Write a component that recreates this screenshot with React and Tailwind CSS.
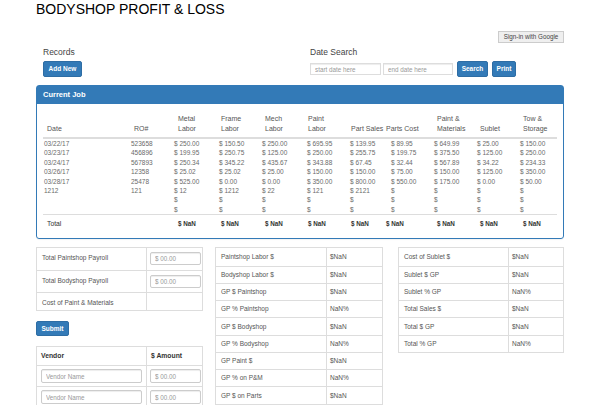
const rows = [
  ['03/22/17', '523658', '$ 250.00', '$ 150.50', '$ 250.00', '$ 695.95', '$ 139.95', '$ 89.95', '$ 649.99', '$ 25.00', '$ 150.00'],
  ['03/23/17', '456896', '$ 199.95', '$ 250.75', '$ 125.00', '$ 250.00', '$ 255.75', '$ 199.75', '$ 375.50', '$ 125.00', '$ 250.00'],
  ['03/24/17', '567893', '$ 250.34', '$ 345.22', '$ 435.67', '$ 343.88', '$ 67.45', '$ 32.44', '$ 567.89', '$ 34.22', '$ 234.33'],
  ['03/26/17', '12358', '$ 25.02', '$ 25.02', '$ 25.00', '$ 150.00', '$ 150.00', '$ 75.00', '$ 150.00', '$ 125.00', '$ 350.00'],
  ['03/28/17', '25478', '$ 525.00', '$ 0.00', '$ 0.00', '$ 350.00', '$ 800.00', '$ 550.00', '$ 175.00', '$ 0.00', '$ 50.00'],
  ['1212', '121', '$ 12', '$ 1212', '$ 22', '$ 121', '$ 2121', '$', '$', '$', '$'],
  ['', '', '$', '$', '$', '$', '$', '$', '$', '$', '$'],
  ['', '', '$', '$', '$', '$', '$', '$', '$', '$', '$'],
]

const heads = [['Date'], ['RO#'], ['Metal', 'Labor'], ['Frame', 'Labor'], ['Mech', 'Labor'], ['Paint', 'Labor'], ['Part Sales'], ['Parts Cost'], ['Paint &', 'Materials'], ['Sublet'], ['Tow &', 'Storage']]

const totals = ['Total', '', '$ NaN', '$ NaN', '$ NaN', '$ NaN', '$ NaN', '$ NaN', '$ NaN', '$ NaN', '$ NaN']

// header / footer text sits a little right of the data text
const offs = ['pl-[4px]', 'pl-[4px]', 'pl-[5px]', 'pl-[3px]', 'pl-[4px]', 'pl-[2px]', 'pl-[2px]', 'ml-[-4px]', 'pl-[4px]', 'pl-[4px]', 'pl-[4px]']

const grid = 'grid grid-cols-[87px_43px_45px_43px_45px_43px_41px_43px_43px_43px_44px]'

const gpRows = [
  ['Paintshop Labor $', '$NaN'],
  ['Bodyshop Labor $', '$NaN'],
  ['GP $ Paintshop', '$NaN'],
  ['GP % Paintshop', 'NaN%'],
  ['GP $ Bodyshop', '$NaN'],
  ['GP % Bodyshop', 'NaN%'],
  ['GP Paint $', '$NaN'],
  ['GP % on P&M', 'NaN%'],
  ['GP $ on Parts', '$NaN'],
]

const totalRows = [
  ['Cost of Sublet $', '$NaN'],
  ['Sublet $ GP', '$NaN'],
  ['Sublet % GP', 'NaN%'],
  ['Total Sales $', '$NaN'],
  ['Total $ GP', '$NaN'],
  ['Total % GP', 'NaN%'],
]

function Btn({ children, className = '' }) {
  return (
    <button className={`block bg-[#337ab7] border border-[#2e6da4] rounded-[2px] text-white font-bold text-[6.5px] leading-none ${className}`}>
      {children}
    </button>
  )
}

function Field({ placeholder, className = '' }) {
  return (
    <input
      placeholder={placeholder}
      className={`block border border-[#ccc] rounded-[2px] bg-white px-[4px] text-[6.3px] placeholder:text-[#999] shadow-[inset_0_1px_1px_rgba(0,0,0,0.075)] outline-none ${className}`}
    />
  )
}

function InfoTable({ data, labelW }) {
  return (
    <div className="border border-[#ddd]">
      {data.map(([label, val], i) => (
        <div key={i} className={`flex h-[17.25px] text-[6.5px] text-[#555] ${i > 0 ? 'border-t border-[#ddd]' : ''}`}>
          <div className={`${labelW} border-r border-[#ddd] pl-[5px] flex items-center`}>{label}</div>
          <div className="flex-1 pl-[3px] flex items-center">{val}</div>
        </div>
      ))}
    </div>
  )
}

export default function App() {
  return (
    <div className="w-[600px] h-[405px] overflow-hidden bg-white px-[36px] pt-px font-['Liberation_Sans',Arial,sans-serif] text-[#333]">
      <h1 className="text-[14px] leading-[16px] font-normal text-black">BODYSHOP PROFIT &amp; LOSS</h1>

      <div className="flex justify-end mt-[14px]">
        <button className="block h-[12px] w-[66px] bg-[#efefef] border border-[#ccc] text-[6.3px] text-[#444] leading-none">Sign-in with Google</button>
      </div>

      {/* Records + date search */}
      <div className="flex mt-[3px]">
        <div className="w-[274px] pl-[7px]">
          <p className="text-[8.5px] leading-[12px] text-[#444]">Records</p>
          <Btn className="mt-[3px] h-[16px] w-[39px]">Add New</Btn>
        </div>
        <div>
          <p className="text-[8.5px] leading-[12px] text-[#444]">Date Search</p>
          <div className="flex items-center mt-[3px] h-[16px]">
            <Field placeholder="start date here" className="w-[71px] h-[12px] border-[#ddd] rounded-none px-[2px]" />
            <Field placeholder="end date here" className="w-[70px] h-[12px] ml-[2px] border-[#ddd] rounded-none px-[2px]" />
            <Btn className="ml-[4px] h-[16px] w-[31px]">Search</Btn>
            <Btn className="ml-[4px] h-[16px] w-[24px]">Print</Btn>
          </div>
        </div>
      </div>

      {/* Current job panel */}
      <div className="mt-[8px] border border-[#337ab7] rounded-[3px] shadow-[0_1px_1px_rgba(0,0,0,0.05)]">
        <div className="h-[18px] bg-[#337ab7] pl-[6px] flex items-center text-white font-bold text-[7.5px]">Current Job</div>
        <div className="px-[6px] pb-[6px]">
          <div className={`${grid} pt-[10px] pb-[3px] border-b-2 border-[#ddd] text-[7px] leading-[10px] text-[#555]`}>
            {heads.map((h, i) => (
              <div key={i} className={`flex flex-col justify-end whitespace-nowrap ${offs[i]}`}>
                {h.map((l) => <span key={l}>{l}</span>)}
              </div>
            ))}
          </div>
          {rows.map((r, i) => (
            <div key={i} className={`${grid} text-[6.5px] leading-[9.4px] text-[#6a6a6a]`}>
              {r.map((c, j) => <div key={j} className="pl-[1px] whitespace-nowrap">{c}</div>)}
            </div>
          ))}
          <div className={`${grid} h-[18px] items-center border-t border-[#ddd] text-[6.8px]`}>
            {totals.map((t, i) => (
              <div key={i} className={`whitespace-nowrap ${offs[i]} ${i === 0 ? 'text-[#333]' : 'font-bold text-[#333] text-[6.3px]'}`}>{t}</div>
            ))}
          </div>
        </div>
      </div>

      {/* Lower section */}
      <div className="flex items-start mt-[8px]">
        <div className="w-[169px]">
          <div className="border border-[#ddd] text-[6.5px] text-[#555]">
            <div className="flex h-[22px]">
              <div className="w-[110px] border-r border-[#ddd] pl-[5px] pt-[5px]">Total Paintshop Payroll</div>
              <div className="flex-1 pl-[3px] pt-[4px]"><Field placeholder="$ 00.00" className="w-[51px] h-[13px]" /></div>
            </div>
            <div className="flex h-[22px] border-t border-[#ddd]">
              <div className="w-[110px] border-r border-[#ddd] pl-[5px] pt-[5px]">Total Bodyshop Payroll</div>
              <div className="flex-1 pl-[3px] pt-[4px]"><Field placeholder="$ 00.00" className="w-[51px] h-[13px]" /></div>
            </div>
            <div className="flex h-[18px] border-t border-[#ddd]">
              <div className="w-[110px] border-r border-[#ddd] pl-[5px] pt-[5px]">Cost of Paint &amp; Materials</div>
              <div className="flex-1"></div>
            </div>
          </div>

          <Btn className="mt-[10px] h-[15px] w-[33px]">Submit</Btn>

          <div className="mt-[10px] border border-[#ddd] text-[6.5px]">
            <div className="flex h-[18px] font-bold text-[#333] text-[6.8px]">
              <div className="w-[110px] border-r border-[#ddd] pl-[4px] flex items-center">Vendor</div>
              <div className="flex-1 pl-[4px] flex items-center">$ Amount</div>
            </div>
            {[0, 1].map((i) => (
              <div key={i} className="flex h-[21px] border-t border-[#ddd]">
                <div className="w-[110px] border-r border-[#ddd] pl-[4px] flex items-center">
                  <Field placeholder="Vendor Name" className="w-[101px] h-[14px]" />
                </div>
                <div className="flex-1 pl-[3px] flex items-center">
                  <Field placeholder="$ 00.00" className="w-[51px] h-[14px]" />
                </div>
              </div>
            ))}
          </div>
        </div>

        <div className="w-[170px] ml-[12px]">
          <InfoTable data={gpRows} labelW="w-[111px]" />
        </div>

        <div className="w-[168px] ml-[15px]">
          <InfoTable data={totalRows} labelW="w-[110px]" />
        </div>
      </div>
    </div>
  )
}
